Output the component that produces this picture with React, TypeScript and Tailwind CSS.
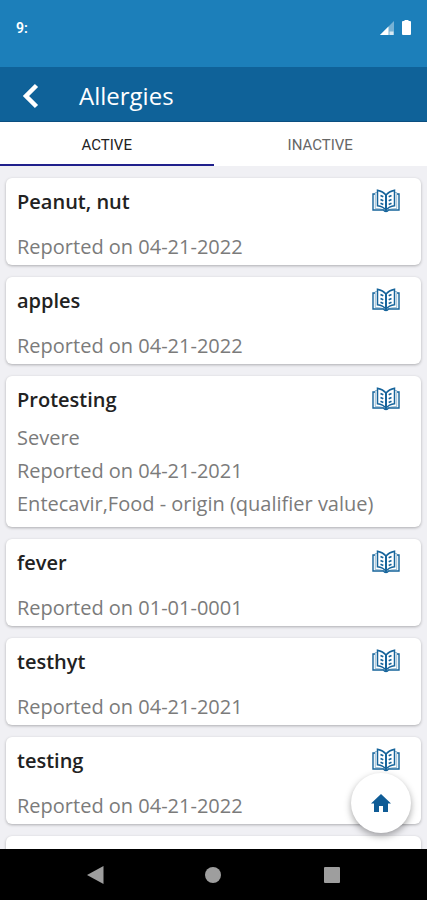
import { useState } from "react";

type Allergy = {
  name: string;
  details: string[];
};

const allergies: Allergy[] = [
  { name: "Peanut, nut", details: ["Reported on 04-21-2022"] },
  { name: "apples", details: ["Reported on 04-21-2022"] },
  {
    name: "Protesting",
    details: ["Severe", "Reported on 04-21-2021", "Entecavir,Food - origin (qualifier value)"],
  },
  { name: "fever", details: ["Reported on 01-01-0001"] },
  { name: "testhyt", details: ["Reported on 04-21-2021"] },
  { name: "testing", details: ["Reported on 04-21-2022"] },
];

function BookIcon() {
  return (
    <svg viewBox="0 0 28 24" className="h-6 w-7" fill="none" stroke="#16649b">
      <path d="M14 6C12 3.500 9.500 2 5.500 1.200v15.600c4 .5 6.500 1.900 8.500 4.400 2-2.500 4.500-3.900 8.500-4.400V1.200C18.500 2 16 3.500 14 6Z" strokeWidth="1.500" />
      <path d="M14 6v15.500" strokeWidth="2" />
      <path d="M5 3.500H3.300v16c4 0 7.200.3 9.200 2.300h3c2-2 5.200-2.300 9.200-2.300v-16H23" strokeWidth=".7" opacity=".6" />
      <path d="M3 5H1v16h10.500c.5 1 1.500 1.500 2.500 1.500s2-.5 2.500-1.500H27V5h-2" strokeWidth="1.400" />
      <path d="m8.500 6.500 2.800 1.300M8.500 10.500l2.800 1.300M8.500 14.300l2.800 1.300M19.500 6.500l-2.800 1.300M19.500 10.500l-2.800 1.300M19.500 14.300l-2.800 1.300" strokeWidth="1.600" />
    </svg>
  );
}

function StatusBar() {
  return (
    <div className="flex h-[67px] shrink-0 items-start justify-between bg-[#1c7fba] px-4 pt-5 text-white">
      <span className="font-[Roboto] text-sm leading-4 font-semibold">9:</span>
      <div className="flex items-start gap-2">
        <svg viewBox="0 0 14 14" className="mt-px h-3.5 w-3.5" fill="currentColor">
          <path d="M14 0v14H0Z" opacity=".4" />
          <path d="M8.500 5.500V14H0Z" />
          <path d="M9.500 10.500h4V14h-4Z" opacity=".7" />
        </svg>
        <svg viewBox="0 0 9 15" className="h-[15px] w-[9px]" fill="currentColor">
          <path d="M2.500 0h4v1H8a1 1 0 0 1 1 1v12a1 1 0 0 1-1 1H1a1 1 0 0 1-1-1V2a1 1 0 0 1 1-1h1.500Z" />
        </svg>
      </div>
    </div>
  );
}

function AllergyCard({ allergy }: { allergy: Allergy }) {
  const spacing = allergy.details.length > 1 ? "gap-[9px] pt-2.5 pb-[11px]" : "pt-[17px] pb-1.5";
  return (
    <li className="rounded-md bg-white px-[11px] pt-2 shadow-[0_1px_3px_rgba(0,0,0,0.28)]">
      <div className="flex items-start justify-between">
        <h2 className="text-xl leading-8 font-semibold text-[#222]">{allergy.name}</h2>
        <button type="button" aria-label={`About ${allergy.name}`} className="mt-[3px] mr-2.5">
          <BookIcon />
        </button>
      </div>
      <div className={`flex flex-col text-xl leading-6 text-[#7b7b7b] ${spacing}`}>
        {allergy.details.map((line) => (
          <p key={line}>{line}</p>
        ))}
      </div>
    </li>
  );
}

export default function App() {
  const [tab, setTab] = useState("ACTIVE");

  return (
    <div className="flex h-screen flex-col overflow-hidden bg-[#f0f0f4] font-['Open_Sans',sans-serif]">
      <StatusBar />
      <header className="flex h-[55px] shrink-0 items-center border-b border-[#0b4f80] bg-[#0f6299] pt-1 text-white">
        <button type="button" aria-label="Back" className="ml-[22px]">
          <svg viewBox="0 0 18 26" className="h-[26px] w-[18px]" fill="none" stroke="currentColor" strokeWidth="4.500">
            <path d="M14.500 2.500 4 13l10.500 10.500" />
          </svg>
        </button>
        <h1 className="ml-[39px] text-2xl font-medium">Allergies</h1>
      </header>
      <div className="grid h-11 shrink-0 grid-cols-2 bg-white font-[Roboto] text-[15px]">
        {["ACTIVE", "INACTIVE"].map((name) => (
          <button
            key={name}
            type="button"
            onClick={() => setTab(name)}
            className={`border-b-2 pt-1 ${tab === name ? "border-[#20208c] text-[#222]" : "border-transparent text-[#666]"}`}
          >
            {name}
          </button>
        ))}
      </div>
      <main className="relative min-h-0 flex-1 overflow-hidden">
        <ul className="flex flex-col gap-3 px-1.5 pt-3">
          {allergies.map((allergy) => (
            <AllergyCard key={allergy.name} allergy={allergy} />
          ))}
          <li className="h-20 rounded-md bg-white shadow-[0_1px_3px_rgba(0,0,0,0.28)]" />
        </ul>
        <button
          type="button"
          aria-label="Home"
          className="absolute right-4 bottom-4 flex size-[60px] items-center justify-center rounded-full bg-white shadow-[0_3px_7px_rgba(0,0,0,0.35)]"
        >
          <svg viewBox="0 0 20 18" className="h-[18px] w-5" fill="#0f5c96">
            <path d="M10 0 0 9.500h3V18h5v-6h4v6h5V9.500h3Z" />
          </svg>
        </button>
      </main>
      <nav className="grid h-[51px] shrink-0 grid-cols-3 items-center justify-items-center bg-black px-9 text-[#9e9e9e]">
        <button type="button" aria-label="System back">
          <svg viewBox="0 0 17 18" className="h-[18px] w-[17px]" fill="currentColor">
            <path d="M16.500 0v18L0 9Z" />
          </svg>
        </button>
        <button type="button" aria-label="System home" className="size-4 rounded-full bg-current" />
        <button type="button" aria-label="Recent apps" className="size-4 rounded-[1px] bg-current" />
      </nav>
    </div>
  );
}
